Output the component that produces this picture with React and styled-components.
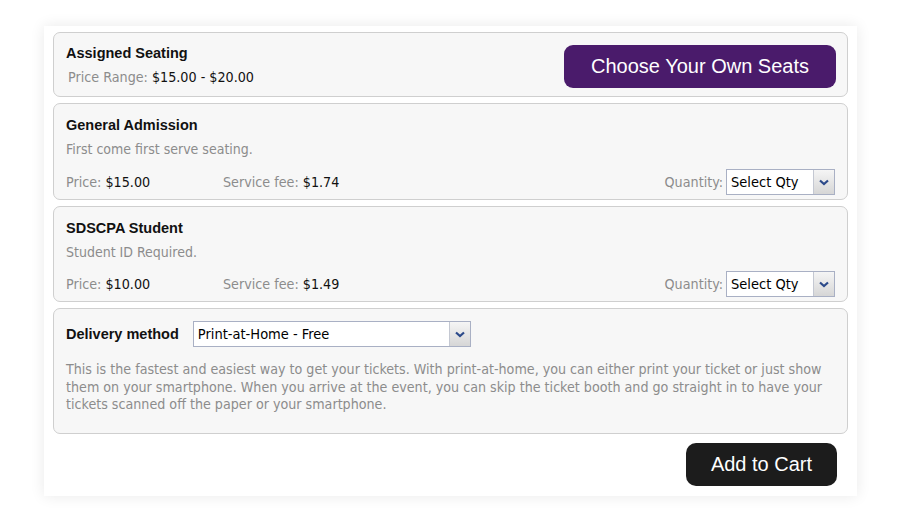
import React from "react";
import styled, { createGlobalStyle } from "styled-components";

const Global = createGlobalStyle`
  html, body { margin: 0; padding: 0; background: #ffffff; }
  body { font-family: "DejaVu Sans Condensed", "DejaVu Sans", sans-serif; }
  * { box-sizing: border-box; }
`;

const Page = styled.div`
  width: 900px;
  height: 522px;
  padding: 26px 43px 0 44px;
`;

const Card = styled.div`
  width: 813px;
  height: 470px;
  background: #ffffff;
  box-shadow: 0 0 14px rgba(0, 0, 0, 0.09);
  padding: 6px 9px 0 9px;
  display: flex;
  flex-direction: column;
  gap: 6px;
`;

const Box = styled.div`
  border: 1px solid #cfcfcf;
  border-radius: 7px;
  background: #f7f7f7;
  padding: ${(p) => p.$pad || "12px 12px 0 12px"};
  height: ${(p) => p.$h}px;
  display: flex;
  flex-direction: column;
`;

const TopRow = styled.div`
  display: flex;
  justify-content: space-between;
  align-items: flex-start;
`;

const Title = styled.div`
  font-family: "Liberation Sans", Arial, sans-serif;
  font-weight: bold;
  font-size: 14.5px;
  color: #111;
  line-height: 18px;
`;

const Label = styled.span`
  color: #8c8c8c;
`;

const Value = styled.span`
  color: #111;
`;

const Line = styled.div`
  font-size: 14.2px;
  line-height: 18px;
  margin-top: ${(p) => p.$mt || 0}px;
  padding-left: ${(p) => p.$pl || 0}px;
`;

const Desc = styled.div`
  font-size: 14px;
  line-height: 18px;
  color: #8c8c8c;
  margin-top: 6px;
`;

const PriceRow = styled.div`
  display: flex;
  align-items: center;
  margin-top: auto;
  margin-bottom: 4px;
  font-size: 14.2px;
`;

const PriceCell = styled.div`
  width: ${(p) => p.$w}px;
`;

const Spacer = styled.div`
  flex: 1;
`;

const QtyLabel = styled.span`
  color: #8c8c8c;
  margin-right: 3px;
`;

const SelectBox = styled.div`
  width: ${(p) => p.$w}px;
  height: 26px;
  border: 1px solid #a9b0c4;
  background: #fff;
  display: flex;
  align-items: stretch;
`;

const SelectText = styled.div`
  flex: 1;
  padding-left: 4px;
  display: flex;
  align-items: center;
  font-size: 14.5px;
  color: #000;
`;

const Arrow = styled.div`
  width: 21px;
  border-left: 1px solid #c4c8d2;
  background: linear-gradient(#f5f5f5, #d6d6d6);
  display: flex;
  align-items: center;
  justify-content: center;
`;

const PurpleButton = styled.button`
  width: 272px;
  height: 43px;
  border: none;
  border-radius: 9px;
  background: #4a1b6b;
  color: #fff;
  font-family: "Liberation Sans", Arial, sans-serif;
  font-size: 20px;
  margin-top: 1px;
  margin-right: -1px;
`;

const DeliveryRow = styled.div`
  display: flex;
  align-items: center;
  gap: 14px;
`;

const Paragraph = styled.div`
  margin-top: 14px;
  font-size: 14.15px;
  line-height: 17.5px;
  color: #8c8c8c;
`;

const Footer = styled.div`
  display: flex;
  justify-content: flex-end;
  padding-top: 3px;
  padding-right: 11px;
`;

const CartButton = styled.button`
  width: 151px;
  height: 43px;
  border: none;
  border-radius: 10px;
  background: #1c1c1c;
  color: #fff;
  font-family: "Liberation Sans", Arial, sans-serif;
  font-size: 20px;
`;

const Chevron = () => (
  <svg width="10" height="7" viewBox="0 0 10 7">
    <path d="M1 1.5 L5 5 L9 1.5" fill="none" stroke="#2c4a8a" strokeWidth="2.2" />
  </svg>
);

const Select = ({ w, text }) => (
  <SelectBox $w={w}>
    <SelectText>{text}</SelectText>
    <Arrow>
      <Chevron />
    </Arrow>
  </SelectBox>
);

const Ticket = ({ title, desc, price, fee, h }) => (
  <Box $h={h} $pad="12px 12px 0 12px">
    <Title>{title}</Title>
    <Desc>{desc}</Desc>
    <PriceRow>
      <PriceCell $w={157}>
        <Label>Price: </Label>
        <Value>{price}</Value>
      </PriceCell>
      <PriceCell $w={200}>
        <Label>Service fee: </Label>
        <Value>{fee}</Value>
      </PriceCell>
      <Spacer />
      <QtyLabel>Quantity:</QtyLabel>
      <Select w={109} text="Select Qty" />
    </PriceRow>
  </Box>
);

export default function App() {
  return (
    <Page>
      <Global />
      <Card>
        <Box $h={65} $pad="11px 12px 0 12px">
          <TopRow>
            <div>
              <Title>Assigned Seating</Title>
              <Line $mt={6} $pl={2}>
                <Label>Price Range: </Label>
                <Value>$15.00 - $20.00</Value>
              </Line>
            </div>
            <PurpleButton>Choose Your Own Seats</PurpleButton>
          </TopRow>
        </Box>
        <Ticket
          h={97}
          title="General Admission"
          desc="First come first serve seating."
          price="$15.00"
          fee="$1.74"
        />
        <Ticket
          h={96}
          title="SDSCPA Student"
          desc="Student ID Required."
          price="$10.00"
          fee="$1.49"
        />
        <Box $h={126} $pad="12px 12px 0 12px">
          <DeliveryRow>
            <Title>Delivery method</Title>
            <Select w={278} text="Print-at-Home - Free" />
          </DeliveryRow>
          <Paragraph>
            This is the fastest and easiest way to get your tickets. With print-at-home, you can either print your ticket or just show them on your smartphone. When you arrive at the event, you can skip the ticket booth and go straight in to have your tickets scanned off the paper or your smartphone.
          </Paragraph>
        </Box>
        <Footer>
          <CartButton>Add to Cart</CartButton>
        </Footer>
      </Card>
    </Page>
  );
}
